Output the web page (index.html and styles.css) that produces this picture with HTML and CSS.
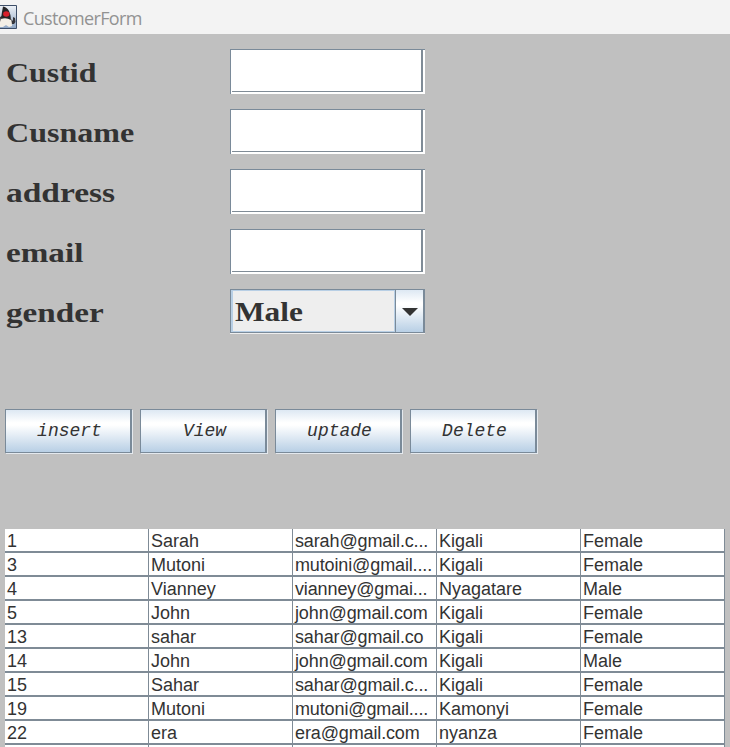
FILE: index.html
```html
<!DOCTYPE html>
<html lang="en">
<head>
<meta charset="utf-8">
<title>CustomerForm</title>
<link rel="stylesheet" href="styles.css">
</head>
<body>
<header class="titlebar">
  <svg class="logo" width="17" height="24" viewBox="0 0 17 24">
    <defs><linearGradient id="sky" x1="0" y1="0" x2="0" y2="1"><stop offset="0" stop-color="#eef2f7"/><stop offset="1" stop-color="#8fa6c4"/></linearGradient></defs>
    <path d="M0 .5H16.5V23.5H0" fill="url(#sky)" stroke="#3d4e68"/>
    <path d="M0 12L2 11 3 15 2 20H0ZM11 14L13 16 13 12 15 13 15.5 17 14 19 11 19Z" fill="#34343a"/>
    <path d="M1 13Q6 11 11 13Q12 18 12 21L9 22 6 20 3 22 0 22V17Z" fill="#f4efe6"/>
    <path d="M3 1.5Q7 2 9 6Q11 10 11 15Q6 12 1 14Q2 6 3 1.5Z" fill="#252528"/>
    <ellipse cx="6.3" cy="9" rx="3.2" ry="2.8" fill="#d9202c"/>
  </svg>
  <h1 class="title">CustomerForm</h1>
</header>
<main>
  <form class="form">
    <label class="label custid" for="custid">Custid</label><div class="field"><input id="custid" class="input"></div>
    <label class="label cusname" for="cusname">Cusname</label><div class="field"><input id="cusname" class="input"></div>
    <label class="label address" for="address">address</label><div class="field"><input id="address" class="input"></div>
    <label class="label email" for="email">email</label><div class="field"><input id="email" class="input"></div>
    <span class="label gender">gender</span>
    <div class="combo"><span class="value"><span class="label male">Male</span></span><span class="arrow"><svg width="16" height="8" viewBox="0 0 16 8"><path d="M0 0H16L8 8Z" fill="#333"/></svg></span></div>
  </form>
  <div class="actions">
    <button type="button">insert</button><button type="button">View</button><button type="button">uptade</button><button type="button">Delete</button>
  </div>
  <div class="grid">
    <span>1</span><span>Sarah</span><span>sarah@gmail.c...</span><span>Kigali</span><span>Female</span>
    <span>3</span><span>Mutoni</span><span>mutoini@gmail....</span><span>Kigali</span><span>Female</span>
    <span>4</span><span>Vianney</span><span>vianney@gmai...</span><span>Nyagatare</span><span>Male</span>
    <span>5</span><span>John</span><span>john@gmail.com</span><span>Kigali</span><span>Female</span>
    <span>13</span><span>sahar</span><span>sahar@gmail.co</span><span>Kigali</span><span>Female</span>
    <span>14</span><span>John</span><span>john@gmail.com</span><span>Kigali</span><span>Male</span>
    <span>15</span><span>Sahar</span><span>sahar@gmail.c...</span><span>Kigali</span><span>Female</span>
    <span>19</span><span>Mutoni</span><span>mutoni@gmail....</span><span>Kamonyi</span><span>Female</span>
    <span>22</span><span>era</span><span>era@gmail.com</span><span>nyanza</span><span>Female</span>
    <span></span><span></span><span></span><span></span><span></span>
  </div>
</main>
</body>
</html>
```
FILE: styles.css
```css
* { box-sizing: border-box; }
body {
  margin: 0;
  height: 747px;
  overflow: hidden;
  background: #c0c0c0;
  color: #333;
}
.titlebar {
  display: flex;
  align-items: center;
  gap: 6px;
  height: 34px;
  background: #f3f3f3;
}
.logo { display: block; }
.title {
  margin: 0;
  font: 400 18px/24px "Open Sans", sans-serif;
  letter-spacing: -0.65px;
  color: #929292;
  padding-top: 1px;
}
.form {
  display: grid;
  grid-template-columns: 224px 195px;
  grid-auto-rows: 45px;
  row-gap: 15px;
  padding: 15px 0 0 6px;
}
.label {
  display: block;
  justify-self: start;
  font: 700 28px/45px "Liberation Serif", serif;
  white-space: nowrap;
  padding-top: 1px;
  transform-origin: 0 50%;
}
.custid { transform: scaleX(1.14); }
.cusname { transform: scaleX(1.145); }
.address { transform: scaleX(1.195); }
.email { transform: scaleX(1.185); }
.gender { transform: scaleX(1.185); }
.male { transform: scaleX(1.12); }
.field {
  background: #fff;
  border: solid #7a8a99;
  border-width: 1px 0 0 1px;
  padding: 0 2px 2px 1px;
}
.input {
  display: block;
  width: 100%;
  height: 42px;
  border: solid #7f8b96;
  border-width: 0 2px 1px 0;
  outline: 0;
  background: #fff;
}
.combo {
  display: flex;
  height: 44px;
  border: solid #7a8a99;
  border-width: 1px 2px 1px 1px;
  box-shadow: 0 1px #eee;
}
.value {
  width: 164px;
  background: #eee;
  border: 1px solid #b8cfe5;
  border-width: 1px 1px 1px 2px;
  padding-left: 2px;
}
.value .label { line-height: 42px; padding: 0; }
.arrow {
  flex: 1;
  border-left: 1px solid #7a8a99;
  display: flex;
  align-items: center;
  justify-content: center;
  padding-top: 2px;
}
.arrow, button {
  background: linear-gradient(#dde8f3 0, #fff 30%, #fff 36%, #b8cfe5 100%);
}
.actions {
  display: flex;
  gap: 8px;
  padding: 75px 0 0 5px;
}
button {
  width: 127px;
  height: 44px;
  padding: 0 0 1px 3px;
  border: solid #7a8a99;
  border-width: 1px 2px 1px 1px;
  border-radius: 0;
  box-shadow: 1px 1px #e4e9ee;
  color: #333;
  font: italic 18px "Liberation Mono", monospace;
}
.grid {
  display: grid;
  grid-template-columns: repeat(5, 144px);
  grid-auto-rows: 24px;
  width: 720px;
  margin: 76px 0 0 5px;
}
.grid span {
  background: #fff;
  border: solid #7f8b96;
  border-width: 0 1px 2px 0;
  padding-left: 2px;
  font: 18px/24px "Liberation Sans", sans-serif;
  white-space: nowrap;
}
.grid span:nth-child(5n+3) { letter-spacing: -0.13px; }
```
